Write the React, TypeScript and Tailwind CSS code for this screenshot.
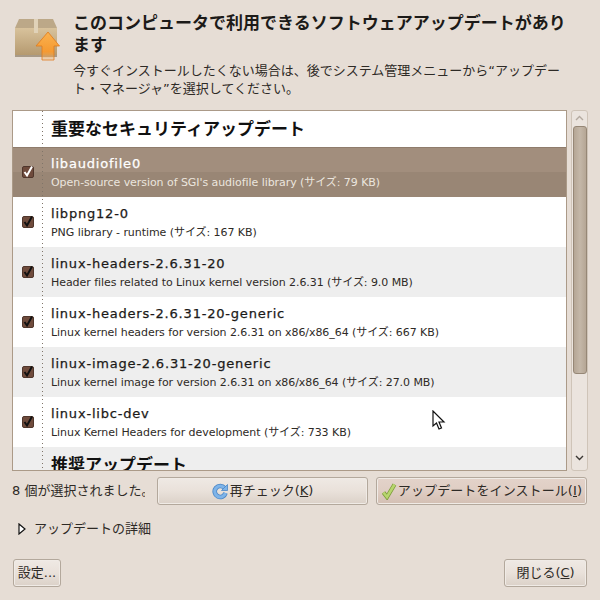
import type { ReactNode } from 'react';

const updates = [
  { name: 'libaudiofile0', desc: "Open-source version of SGI's audiofile library (サイズ: 79 KB)" },
  { name: 'libpng12-0', desc: 'PNG library - runtime (サイズ: 167 KB)' },
  { name: 'linux-headers-2.6.31-20', desc: 'Header files related to Linux kernel version 2.6.31 (サイズ: 9.0 MB)' },
  { name: 'linux-headers-2.6.31-20-generic', desc: 'Linux kernel headers for version 2.6.31 on x86/x86_64 (サイズ: 667 KB)' },
  { name: 'linux-image-2.6.31-20-generic', desc: 'Linux kernel image for version 2.6.31 on x86/x86_64 (サイズ: 27.0 MB)' },
  { name: 'linux-libc-dev', desc: 'Linux Kernel Headers for development (サイズ: 733 KB)' },
];

function PackageIcon() {
  return (
    <svg width="48" height="48" viewBox="0 0 48 48">
      <defs>
        <linearGradient id="boxFront" x1="0" y1="0" x2="0" y2="1">
          <stop offset="0" stopColor="#d8c29c" />
          <stop offset="1" stopColor="#b59a70" />
        </linearGradient>
        <linearGradient id="arrowFill" x1="0" y1="0" x2="0" y2="1">
          <stop offset="0" stopColor="#fbb24f" />
          <stop offset="0.7" stopColor="#f59a32" />
          <stop offset="1" stopColor="#f5a84f" stopOpacity="0.15" />
        </linearGradient>
      </defs>
      <path d="M1 10 L5 1 H39 L43 10 Z" fill="#bca888" />
      <rect x="1" y="10" width="42" height="27" fill="url(#boxFront)" />
      <rect x="1" y="37" width="42" height="2" fill="#a89a88" />
      <rect x="20" y="1" width="4" height="14" fill="#e0d2b8" />
      <path d="M34 14 L45.5 28 H40 V42 H28 V28 H22 Z" fill="url(#arrowFill)" stroke="#e07a1c" strokeWidth="1" strokeOpacity="0.8" />
    </svg>
  );
}

function Check({ selected }: { selected?: boolean }) {
  return (
    <span className="w-[12px] h-[12px] rounded-[2px] bg-[#6f4b3c] border border-[#4f362b] flex items-center justify-center">
      <svg width="12" height="12" viewBox="0 0 12 12" className="shrink-0 overflow-visible">
        <path d="M2.5 6 L5 9.5 L10 0.5" fill="none" stroke={selected ? '#ffffff' : '#111111'} strokeWidth="2" />
      </svg>
    </span>
  );
}

function Button({ children, className = '' }: { children: ReactNode; className?: string }) {
  return (
    <div className={`h-[28px] rounded-[3px] border border-[#b3a89c] shadow-[inset_0_0_0_1px_#f0ebe6] flex items-center justify-center text-[13px] text-[#2e2a26] ${className}`}>
      {children}
    </div>
  );
}

export default function App() {
  return (
    <div className="relative w-[600px] h-[600px] overflow-hidden bg-[#e6ddd5] font-['DejaVu_Sans','Noto_Sans_CJK_JP',sans-serif]">
      {/* Header */}
      <div className="flex h-[110px] pl-[14px] pt-[12px]">
        <div className="w-[59px] shrink-0 pt-[6px]">
          <PackageIcon />
        </div>
        <div className="w-[496px]">
          <h1 className="text-[17px] leading-[22px] font-bold text-[#1c1a18]">
            このコンピュータで利用できるソフトウェアアップデートがあります
          </h1>
          <p className="mt-[6px] text-[13px] leading-[18px] text-[#2e2a26]">
            今すぐインストールしたくない場合は、後でシステム管理メニューから“アップデート・マネージャ”を選択してください。
          </p>
        </div>
      </div>

      {/* Update list + scrollbar */}
      <div className="flex h-[361px] pl-[12px]">
        <div className="w-[555px] h-full border border-[#ab9a88] bg-white overflow-hidden relative">
          <div className="h-[36px] flex items-center pl-[38px] pt-[2px] text-[17px] font-bold text-[#111111]">
            重要なセキュリティアップデート
          </div>
          {updates.map((u, i) => {
            const selected = i === 0;
            const rowBg = selected
              ? 'bg-[linear-gradient(#a28e7d_0,#a28e7d_50%,#998675_50%,#998675_100%)] shadow-[inset_0_1px_0_#8f7c6c]'
              : i % 2 === 0
                ? 'bg-[#eeeeee]'
                : 'bg-white';
            return (
              <div key={u.name} className={`h-[50px] flex ${rowBg}`}>
                <div className="w-[30px] flex items-center pl-[9px]">
                  <Check selected={selected} />
                </div>
                <div className="pl-[8px] pt-[7px]">
                  <div className={`text-[13px] leading-[20px] tracking-[0.8px] [-webkit-text-stroke:0.25px] ${selected ? 'text-white' : 'text-[#1c1a18]'}`}>
                    {u.name}
                  </div>
                  <div className={`text-[11px] leading-[18px] tracking-[-0.06px] ${selected ? 'text-[#ebe5de]' : 'text-[#2e2a26]'}`}>
                    {u.desc}
                  </div>
                </div>
              </div>
            );
          })}
          <div className="h-[40px] bg-[#eeeeee] pl-[38px] pt-[7px] text-[17px] leading-[22px] font-bold text-[#111111]">
            推奨アップデート
          </div>
          {/* Tree guide */}
          <div className="absolute left-[29px] top-0 bottom-0 w-px bg-[repeating-linear-gradient(#7f7468_0,#7f7468_1px,transparent_1px,transparent_4px)]" />
        </div>

        <div className="ml-[4px] w-[17px] h-full rounded-[3px] border border-[#cfc4b8] bg-[#ebe4de] flex flex-col items-center">
          <svg width="15" height="15" viewBox="0 0 15 15" className="shrink-0">
            <path d="M4 9 L7.5 5.5 L11 9" fill="none" stroke="#b4aaa0" strokeWidth="1.4" />
          </svg>
          <div className="w-[14px] h-[248px] rounded-[3px] border border-[#968776] bg-[linear-gradient(90deg,#b5a695,#c4b7a8_50%,#b5a695)]" />
          <div className="flex-1" />
          <svg width="15" height="15" viewBox="0 0 15 15" className="shrink-0 mb-[5px]">
            <path d="M4 6 L7.5 9.5 L11 6" fill="none" stroke="#3c3834" strokeWidth="1.4" />
          </svg>
        </div>
      </div>

      {/* Action row */}
      <div className="flex items-center h-[28px] mt-[6px] pl-[12px]">
        <span className="w-[133px] mr-[12px] overflow-hidden whitespace-nowrap text-[13px] text-[#2e2a26]">8 個が選択されました。</span>
        <Button className="w-[211px] bg-[linear-gradient(#efe9e4,#e9e1da_50%,#dbd1c8)]">
          <svg width="17" height="17" viewBox="0 0 17 17" className="mr-[1px]">
            <path d="M12.5 5 A5.5 5.5 0 1 0 13.5 10" fill="none" stroke="#4a86c6" strokeWidth="4.6" />
            <path d="M12.5 5 A5.5 5.5 0 1 0 13.5 10" fill="none" stroke="#7fb4e8" strokeWidth="3" />
            <path d="M9.5 7.5 L15.5 1.5 V7.5 Z" fill="#7fb4e8" stroke="#4a86c6" strokeWidth="0.8" />
          </svg>
          再チェック(<span className="underline">K</span>)
        </Button>
        <Button className="ml-[8px] w-[211px] border-[#9c8c7e] bg-[linear-gradient(#e3d3ca,#dfcdc3_50%,#d3bfb3)]">
          <svg width="16" height="18" viewBox="0 0 16 18" className="mr-[1px]">
            <path d="M2.5 10.5 L6 15 L13.5 2.5" fill="none" stroke="#7d9c3a" strokeWidth="4.2" />
            <path d="M2.5 10.5 L6 15 L13.5 2.5" fill="none" stroke="#b7d56e" strokeWidth="2.6" />
          </svg>
          <span className="tracking-[0.1px]">アップデートをインストール(<span className="underline">I</span>)</span>
        </Button>
      </div>

      {/* Details expander */}
      <div className="flex items-center h-[20px] mt-[14px] pl-[18px] text-[13px] text-[#2e2a26]">
        <svg width="8" height="12" viewBox="0 0 8 12" className="mr-[8px]">
          <path d="M1 1 L7 6 L1 11 Z" fill="#fff" stroke="#111" strokeWidth="1.2" />
        </svg>
        アップデートの詳細
      </div>

      {/* Bottom buttons */}
      <div className="flex justify-between mt-[20px] pl-[13px] pr-[13px]">
        <Button className="w-[48px] bg-[linear-gradient(#efe9e4,#e9e1da_50%,#dbd1c8)]">設定...</Button>
        <Button className="w-[83px] bg-[linear-gradient(#efe9e4,#e9e1da_50%,#dbd1c8)]">
          閉じる(<span className="underline">C</span>)
        </Button>
      </div>

      {/* Mouse pointer */}
      <svg width="14" height="21" viewBox="0 0 14 21" className="absolute left-[432px] top-[410px]">
        <path d="M1 1 V16 L4.5 13 L7 19 L9.5 18 L7 12 H12 Z" fill="#fff" stroke="#111" strokeWidth="1.2" />
      </svg>
    </div>
  );
}
